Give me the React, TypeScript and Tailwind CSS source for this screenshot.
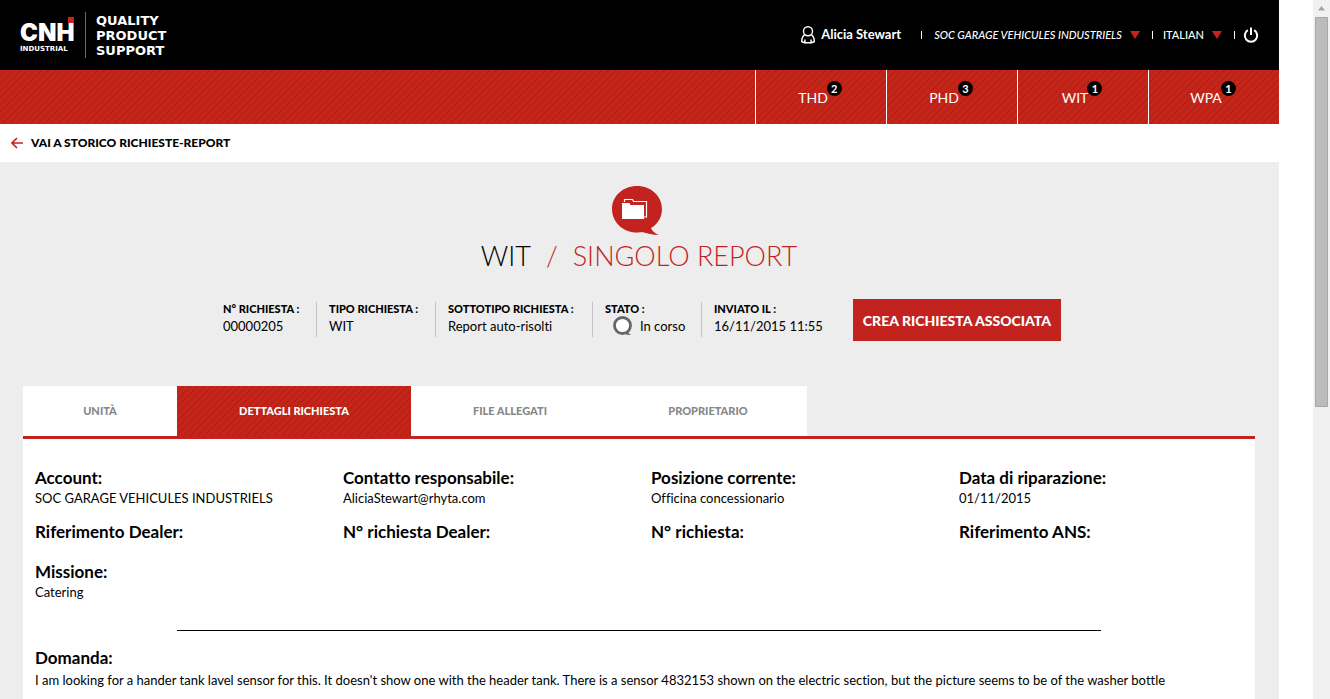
import React from "react";

const stripes =
  "bg-[#c52519] bg-[linear-gradient(135deg,transparent_46%,#a61e16_46%,#a61e16_54%,transparent_54%)] bg-[length:7px_7px]";

const navItems = [
  { label: "THD", count: 2 },
  { label: "PHD", count: 3 },
  { label: "WIT", count: 1 },
  { label: "WPA", count: 1 },
];

const tabs = [
  { label: "UNITÀ", width: "w-[154px]" },
  { label: "DETTAGLI RICHIESTA", width: "w-[234px]", active: true },
  { label: "FILE ALLEGATI", width: "w-[198px]" },
  { label: "PROPRIETARIO", width: "w-[198px]" },
];

const details = [
  { label: "Account:", value: "SOC GARAGE VEHICULES INDUSTRIELS" },
  { label: "Contatto responsabile:", value: "AliciaStewart@rhyta.com" },
  { label: "Posizione corrente:", value: "Officina concessionario" },
  { label: "Data di riparazione:", value: "01/11/2015" },
  { label: "Riferimento Dealer:" },
  { label: "N° richiesta Dealer:" },
  { label: "N° richiesta:" },
  { label: "Riferimento ANS:" },
  { label: "Missione:", value: "Catering" },
];

function Logo() {
  return (
    <a href="#" className="flex items-center text-white" aria-label="CNH Industrial">
      <span className="relative flex w-[54px] flex-col pt-1.5 font-['Inter'] leading-none">
        <span className="text-[24px] leading-[20px] font-black">CNH</span>
        <span className="mt-0.5 font-['DejaVu_Sans'] text-[7px] leading-[8px] font-bold">INDUSTRIAL</span>
        <span className="absolute top-0 right-0 size-[6px] bg-[#c8261c]" />
      </span>
      <span className="ml-[11px] h-[46px] w-px bg-[#6b6b6b]" />
      <span className="ml-[10px] font-['DejaVu_Sans'] text-[13px] leading-[15px] font-bold">
        QUALITY
        <br />
        PRODUCT
        <br />
        SUPPORT
      </span>
    </a>
  );
}

function Caret() {
  return (
    <svg width="10" height="8" viewBox="0 0 10 8" aria-hidden="true">
      <path d="M0 0h10L5 8z" fill="#c3231f" />
    </svg>
  );
}

function Header() {
  return (
    <header className="flex h-[70px] shrink-0 items-center justify-between bg-black pr-5 pl-5 text-white">
      <Logo />
      <div className="flex items-center">
        <svg width="14" height="18" viewBox="0 0 14 18" fill="none" stroke="#fff" strokeWidth="1.4" aria-hidden="true">
          <circle cx="7" cy="5.3" r="4.5" />
          <path d="M3.6 8.6C1.6 10.4.7 12.6.7 15.6c1 .6 2 .9 3.2 1.2v-3.4M10.4 8.6c2 1.8 2.9 4 2.9 7-1 .6-2 .9-3.2 1.2v-3.4M3.9 16.8h6.2" />
        </svg>
        <span className="ml-1.5 text-[13px] font-bold">Alicia Stewart</span>
        <span className="ml-5 h-2 w-px bg-white" />
        <button type="button" className="ml-3 flex items-center gap-2 text-[11px] font-medium italic">
          SOC GARAGE VEHICULES INDUSTRIELS
          <Caret />
        </button>
        <span className="ml-3 h-2 w-px bg-white" />
        <button type="button" className="ml-2.5 flex items-center gap-2 text-[11px] font-medium">
          ITALIAN
          <Caret />
        </button>
        <span className="ml-3 h-2 w-px bg-white" />
        <button type="button" aria-label="Esci" className="ml-2">
          <svg width="16" height="16" viewBox="0 0 16 16" fill="none" stroke="#fff" strokeWidth="2" aria-hidden="true">
            <path d="M4.8 3.2a6.2 6.2 0 1 0 6.4 0M8 .5v7.5" />
          </svg>
        </button>
      </div>
    </header>
  );
}

function ReportIcon() {
  return (
    <svg className="mr-1" width="50" height="50" viewBox="0 0 50 50" aria-hidden="true">
      <path d="M25 0C11 0 0 10 0 23s11 23.500 25 23.500c2 0 4-.1 5-.4 5 1.500 11 2.900 17 3-4-1.600-7-4-8-7C46 38 50 31 50 23 50 10 39 0 25 0z" fill="#c3231f" />
      <path d="M12.500 16v-2.500h8l1 2.000h13v15.500h-3" fill="none" stroke="#fff" strokeWidth="1.200" />
      <path d="M10 17h7.500l1 2H32v14H10z" fill="#fff" />
    </svg>
  );
}

function Meta({ label, className, children }: { label: string; className: string; children: React.ReactNode }) {
  return (
    <div className={`h-[35px] shrink-0 whitespace-nowrap ${className}`}>
      <dt className="text-[11px] leading-[13px] font-black">{label}</dt>
      <dd className="flex items-center text-[13px] leading-[22px]">{children}</dd>
    </div>
  );
}

export default function App() {
  return (
    <div className="flex h-screen overflow-hidden bg-white font-['Lato','Liberation_Sans',sans-serif] text-black [font-variant-ligatures:none]">
      <div className="mr-[34px] flex min-w-0 flex-1 flex-col">
        <Header />
        <nav className={`flex h-[54px] shrink-0 justify-end ${stripes}`}>
          {navItems.map((item) => (
            <a key={item.label} href="#" className="flex w-[131px] items-center justify-center border-l border-white pr-4 text-[14px] text-white">
              <span className="relative">
                {item.label}
                <span className="absolute -top-1.5 -right-3.5 flex size-[15px] items-center justify-center rounded-full bg-black text-[11px] leading-none font-bold">
                  {item.count}
                </span>
              </span>
            </a>
          ))}
        </nav>
        <div className="flex h-[38px] shrink-0 items-center pl-[11px]">
          <a href="#" className="flex items-center gap-2 text-[12px] font-black">
            <svg width="12" height="12" viewBox="0 0 12 12" fill="none" stroke="#c3231f" strokeWidth="1.600" aria-hidden="true">
              <path d="M12 6H1M6 1L1 6l5 5" />
            </svg>
            VAI A STORICO RICHIESTE-REPORT
          </a>
        </div>

        <main className="flex-1 bg-[#ededed] pr-6 pl-[23px]">
          <div className="flex flex-col items-center pt-6">
            <ReportIcon />
            <h1 className="flex gap-[15px] text-[27px] leading-[40px] font-light">
              <span>WIT</span>
              <span className="text-[#c3231f]">/</span>
              <span className="text-[#c3231f]">SINGOLO REPORT</span>
            </h1>
          </div>

          <div className="mt-[23px] flex justify-center pl-1.5">
            <dl className="flex pt-[3px]">
              <Meta label="N° RICHIESTA :" className="w-[94px] border-r border-[#c4c4c4]">00000205</Meta>
              <Meta label="TIPO RICHIESTA :" className="w-[119px] border-r border-[#c4c4c4] pl-3">WIT</Meta>
              <Meta label="SOTTOTIPO RICHIESTA :" className="w-[157px] border-r border-[#c4c4c4] pl-3">Report auto-risolti</Meta>
              <Meta label="STATO :" className="w-[109px] border-r border-[#c4c4c4] pl-3">
                <svg className="mr-2 ml-2" width="19" height="20" viewBox="0 0 19 20" aria-hidden="true">
                  <path d="M11 17.500c2.500 1 4.500 1.500 7 1.500-1.500-.8-2.500-1.800-3-3" fill="#666" />
                  <circle cx="9.500" cy="9.500" r="8" fill="#fff" stroke="#666" strokeWidth="2.800" />
                </svg>
                In corso
              </Meta>
              <Meta label="INVIATO IL :" className="w-[151px] pl-3">16/11/2015 11:55</Meta>
            </dl>
            <button type="button" className="h-[42px] w-[208px] bg-[#c3231f] text-[14px] font-black whitespace-nowrap text-white">
              CREA RICHIESTA ASSOCIATA
            </button>
          </div>

          <div role="tablist" className="mt-[45px] flex border-b-[3px] border-[#c3231f]">
            {tabs.map((tab) => (
              <button
                key={tab.label}
                type="button"
                role="tab"
                aria-selected={Boolean(tab.active)}
                className={`h-[50px] text-[11px] font-black ${tab.width} ${tab.active ? `${stripes} text-white` : "bg-white text-[#878787]"}`}
              >
                {tab.label}
              </button>
            ))}
          </div>

          <section className="bg-white pt-[29px] pb-8">
            <dl className="grid grid-cols-4 gap-y-5">
              {details.map((d) => (
                <div key={d.label} className="pl-3">
                  <dt className="text-[17px] leading-5 font-bold">{d.label}</dt>
                  {d.value && <dd className="-mb-[6px] text-[13px] leading-5">{d.value}</dd>}
                </div>
              ))}
            </dl>
            <hr className="mx-auto mt-[34px] w-3/4 border-black" />
            <div className="mt-[17px] pl-3">
              <h2 className="text-[17px] leading-5 font-bold">Domanda:</h2>
              <p className="mt-0.5 text-[13px] leading-5 whitespace-nowrap">
                I am looking for a hander tank lavel sensor for this. It doesn't show one with the header tank. There is a sensor 4832153 shown on the electric section, but the picture seems to be of the washer bottle
              </p>
            </div>
          </section>
        </main>
      </div>

      <div aria-hidden="true" className="flex w-[17px] flex-col items-center bg-[#f1f1f1]">
        <svg className="my-1.5" width="7" height="5" viewBox="0 0 7 5">
          <path d="M3.500 0L7 4.500H0z" fill="#a3a3a3" />
        </svg>
        <div className="h-[390px] w-[13px] border border-[#a8a8a8] bg-[#bcbcbc]" />
      </div>
    </div>
  );
}
